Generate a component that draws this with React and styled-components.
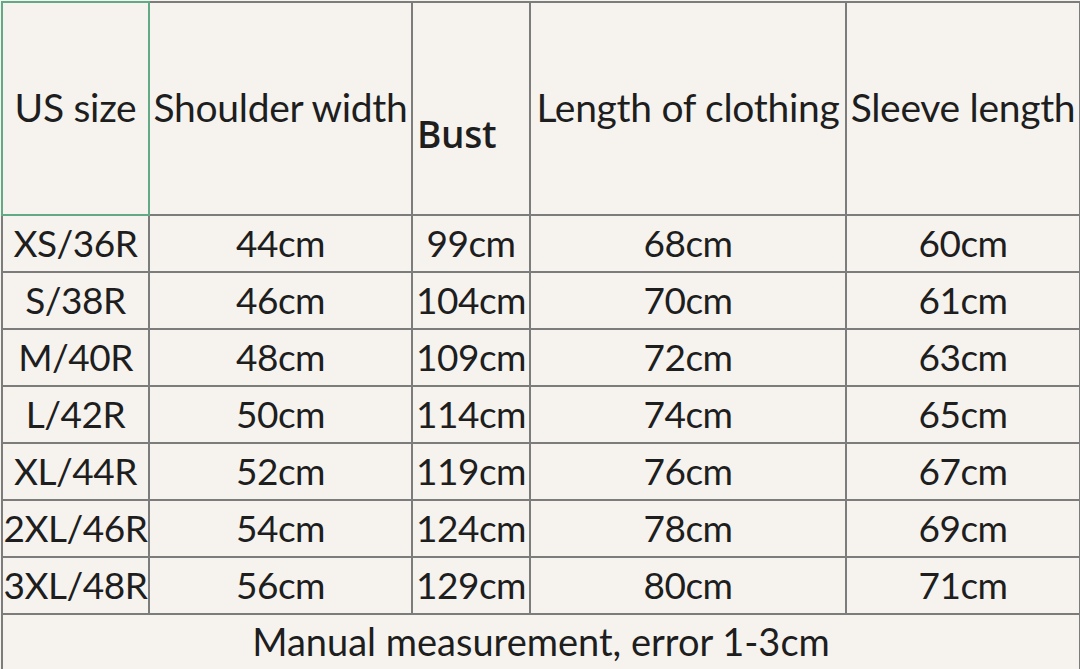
import styled, { createGlobalStyle } from "styled-components";

const GlobalStyle = createGlobalStyle`
	html, body {
		margin: 0;
		padding: 0;
		background-color: #f6f3ef;
	}
	body {
		font-family: Lato, "Open Sans", "Liberation Sans", sans-serif;
		color: #1e1e1e;
		overflow: hidden;
	}
`;

const Page = styled.div`
	width: 1080px;
	height: 669px;
	padding: 1px 0 0 1px;
	box-sizing: border-box;
	background-color: #f6f3ef;
`;

const Table = styled.table`
	width: 1078px;
	table-layout: fixed;
	border-collapse: collapse;
`;

const HeadCell = styled.th`
	height: 207px;
	padding: 0 0 4px;
	border: 2px solid #7c7c7c;
	font-size: 39px;
	font-weight: 400;
	text-align: ${(props) => (props.left ? "left" : "center")};
	white-space: nowrap;
	overflow: visible;
	letter-spacing: -0.3px;
	${(props) =>
		props.selected &&
		`
		border-color: #62a985;
	`}
`;

const BustLabel = styled.span`
	display: inline-block;
	padding: 54px 0 0 4px;
	font-family: "Open Sans", sans-serif;
	font-weight: 600;
	font-size: 37px;
`;

const Cell = styled.td`
	height: 52px;
	padding: 0 0 3px;
	border: 2px solid #7c7c7c;
	font-size: 37px;
	text-align: center;
	white-space: nowrap;
	letter-spacing: -0.5px;
`;

const Note = styled.td`
	height: 58px;
	padding: 0;
	border: 2px solid #7c7c7c;
	border-bottom: none;
	font-size: 38px;
	text-align: center;
	white-space: nowrap;
	vertical-align: top;
	line-height: 52px;
`;

const rows = [
	["XS/36R", "44cm", "99cm", "68cm", "60cm"],
	["S/38R", "46cm", "104cm", "70cm", "61cm"],
	["M/40R", "48cm", "109cm", "72cm", "63cm"],
	["L/42R", "50cm", "114cm", "74cm", "65cm"],
	["XL/44R", "52cm", "119cm", "76cm", "67cm"],
	["2XL/46R", "54cm", "124cm", "78cm", "69cm"],
	["3XL/48R", "56cm", "129cm", "80cm", "71cm"],
];

const App = () => {
	return (
		<Page>
			<GlobalStyle />
			<Table>
				<colgroup>
					<col style={{ width: 147 }} />
					<col style={{ width: 263 }} />
					<col style={{ width: 118 }} />
					<col style={{ width: 316 }} />
					<col style={{ width: 234 }} />
				</colgroup>
				<thead>
					<tr>
						<HeadCell selected>US size</HeadCell>
						<HeadCell>Shoulder width</HeadCell>
						<HeadCell left>
							<BustLabel>Bust</BustLabel>
						</HeadCell>
						<HeadCell>Length of clothing</HeadCell>
						<HeadCell>Sleeve length</HeadCell>
					</tr>
				</thead>
				<tbody>
					{rows.map((row) => (
						<tr key={row[0]}>
							{row.map((value, i) => (
								<Cell key={i}>{value}</Cell>
							))}
						</tr>
					))}
					<tr>
						<Note colSpan={5}>Manual measurement, error 1-3cm</Note>
					</tr>
				</tbody>
			</Table>
		</Page>
	);
};

export default App;
